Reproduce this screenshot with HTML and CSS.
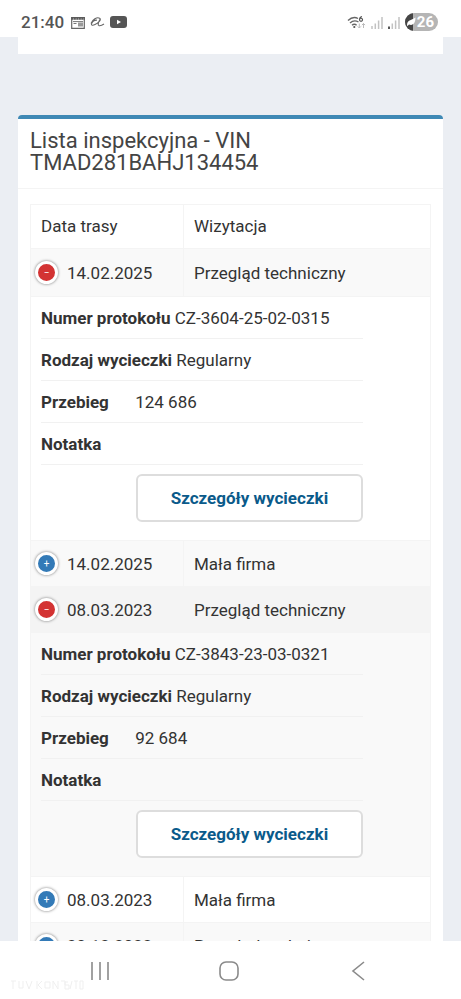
FILE: index.html
```html
<!DOCTYPE html>
<html lang="pl">
<head>
<meta charset="utf-8">
<meta name="viewport" content="width=device-width, initial-scale=1">
<title>Lista inspekcyjna</title>
<link rel="stylesheet" href="styles.css">
</head>
<body>
<header class="status">
  <div class="status-group">
    <span class="clock">21:40</span>
    <svg viewBox="0 0 14 13" width="14" height="13"><path d="M.7 1.5h12.6v10.8H.7z" fill="none" stroke="#666" stroke-width="1.2"/><path d="M.2 2.4h13.600" stroke="#5a5a5a" stroke-width="2.600" stroke-dasharray="2.200 .3"/><path d="M2 5.600h10M2.500 7.500h3" stroke="#777" stroke-width="1"/><path d="M7 6.500h5v4H7z" fill="#999"/></svg>
    <svg viewBox="0 0 15 12" width="15" height="12"><path d="M1 7.500C2.500 3.500 7 .8 9.600 2.200C12 3.600 8 7 5 8.600C2.500 9.900 1 9.300 1.600 7.600C2.500 5.500 5 4 7 4.200M9.800 3.500C8.500 6.500 7.300 9 9 9.600C10.500 10 12.500 9 14 8" fill="none" stroke="#666" stroke-width="1.100"/></svg>
    <svg viewBox="0 0 17 12" width="17" height="12"><rect width="17" height="12" rx="3" fill="#555"/><path d="M7 3.700v4.600L11 6z" fill="#fff"/></svg>
  </div>
  <div class="status-group">
    <svg viewBox="0 0 20 15" width="20" height="15"><g fill="none" stroke="#666" stroke-width="1.400"><path d="M2 5.500Q7 .8 12 3.500M4 8Q8 4.400 12.500 7M6 10.300q2.300-2 4.600 0"/></g><circle cx="8.300" cy="12" r="1.100" fill="#555"/><path d="M16 1.500Q13.500 2 13.500 4.800a1.500 1.500 0 1 0 .1-.6" fill="none" stroke="#555" stroke-width="1.200"/><path d="M13.300 8.500V13m-1.600-1.600 1.600 1.600 1.600-1.600M17.500 13V8.500m-1.600 1.600 1.600-1.600 1.600 1.600" fill="none" stroke="#bbb"/></svg>
    <svg viewBox="0 0 12 13" width="12" height="13"><path d="M1 10v3M4.300 7.500V13M7.600 4.500V13M11 1v12" stroke="#c2c2c2" stroke-width="1.500"/></svg>
    <svg viewBox="0 0 12 13" width="12" height="13"><path d="M1 10.500V13" stroke="#555" stroke-width="2"/><path d="M4.300 7.500V13M7.600 4.500V13M11 1v12" stroke="#c2c2c2" stroke-width="1.500"/></svg>
    <span class="battery"><svg viewBox="0 0 11 18" width="11" height="18"><path d="M0 0h8v18H0z" fill="#454545"/><path d="M2 12.500C2 7 6 7.500 10.500 4.500C10.500 10 8 13 4 11.500L2.500 13z" fill="#fff"/></svg>26</span>
  </div>
</header>

<main class="page">
  <div class="prev-box"></div>
  <section class="box">
    <h1 class="box-title">Lista inspekcyjna - VIN TMAD281BAHJ134454</h1>
    <div class="box-body">
      <table class="visits">
        <thead>
          <tr><th class="col-date" scope="col">Data trasy</th><th scope="col">Wizytacja</th></tr>
        </thead>
        <tbody>
          <tr class="odd first"><td><span class="date"><button class="toggle open" aria-label="Zwiń">−</button>14.02.2025</span></td><td>Przegląd techniczny</td></tr>
          <tr class="detail"><td colspan="2">
            <ul class="fields">
              <li><b>Numer protokołu</b> CZ-3604-25-02-0315</li>
              <li><b>Rodzaj wycieczki</b> Regularny</li>
              <li><b>Przebieg</b> 124 686</li>
              <li><b>Notatka</b></li>
              <li class="action"><a class="btn" href="#">Szczegóły wycieczki</a></li>
            </ul>
          </td></tr>
          <tr class="odd"><td><span class="date"><button class="toggle" aria-label="Rozwiń">+</button>14.02.2025</span></td><td>Mała firma</td></tr>
          <tr class="hover"><td><span class="date"><button class="toggle open" aria-label="Zwiń">−</button>08.03.2023</span></td><td>Przegląd techniczny</td></tr>
          <tr class="detail odd"><td colspan="2">
            <ul class="fields">
              <li><b>Numer protokołu</b> CZ-3843-23-03-0321</li>
              <li><b>Rodzaj wycieczki</b> Regularny</li>
              <li><b>Przebieg</b> 92 684</li>
              <li><b>Notatka</b></li>
              <li class="action"><a class="btn" href="#">Szczegóły wycieczki</a></li>
            </ul>
          </td></tr>
          <tr><td><span class="date"><button class="toggle" aria-label="Rozwiń">+</button>08.03.2023</span></td><td>Mała firma</td></tr>
          <tr class="odd"><td><span class="date"><button class="toggle" aria-label="Rozwiń">+</button>20.12.2022</span></td><td>Przegląd techniczny</td></tr>
        </tbody>
      </table>
    </div>
  </section>
</main>

<nav class="navbar">
  <button aria-label="Ostatnie"><svg viewBox="0 0 20 20" width="20" height="20"><path d="M2 1v18M10 1v18M18 1v18" stroke="#8a8a8a" stroke-width="1.600"/></svg></button>
  <button aria-label="Ekran główny"><svg viewBox="0 0 20 20" width="20" height="20"><rect x="1" y="1" width="18" height="18" rx="6" fill="none" stroke="#8a8a8a" stroke-width="1.600"/></svg></button>
  <button aria-label="Wstecz"><svg viewBox="0 0 20 20" width="20" height="20"><path d="M16 1 5 10 16 19" fill="none" stroke="#8a8a8a" stroke-width="1.600"/></svg></button>
  <svg class="mark" viewBox="0 0 74 10" width="74" height="10"><path d="M1 1h5M3 1v8M9 1v7h4V1M16 1l3 8 3-8M27 1v8M32 1l-4 4 4 4M35 2h5v6h-5zM43 9V1l5 8V1M51 1h4v8M58 2h-3v3h4v4h-4M62 1l-2 8M64 1h4M66 1v8M70 1h3v8h-3z" fill="none" stroke="#efefef"/></svg>
</nav>
</body>
</html>
```
FILE: styles.css
```css
* { box-sizing: border-box; }

body {
  margin: 0;
  height: 100vh;
  display: flex;
  flex-direction: column;
  overflow: hidden;
  background: #fff;
  color: #333;
  font: 17px/24px Roboto, sans-serif;
}

button { border: 0; padding: 0; background: none; font: inherit; }
svg { display: block; }

.status {
  flex: none;
  height: 37px;
  padding: 7px 23px 0 21px;
  display: flex;
  align-items: center;
  justify-content: space-between;
}
.status-group { display: flex; align-items: center; gap: 5px; color: #555; }
.clock { font-weight: 500; margin-right: 2px; }
.battery {
  display: flex;
  align-items: center;
  height: 18px;
  padding-right: 4px;
  gap: 1px;
  border-radius: 9px;
  overflow: hidden;
  background: #b5b5b5;
  color: #fff;
  font-size: 15px;
  font-weight: 700;
}

.page {
  flex: 1;
  min-height: 0;
  overflow: hidden;
  padding: 0 18px;
  background: #ebeef3;
}
.prev-box { height: 17px; margin-bottom: 61px; background: #fff; }
.box {
  border-top: 4px solid #3f89b5;
  border-radius: 4px;
  background: #fff;
}
.box-title {
  margin: 0;
  padding: 11px 12px 14px;
  border-bottom: 1px solid #f4f4f4;
  font-size: 22px;
  line-height: 22px;
  font-weight: 400;
  color: #444;
}
.box-body { padding: 15px 12px; }

.visits {
  width: 100%;
  table-layout: fixed;
  border-collapse: separate;
  border-spacing: 0;
  border: 1px solid #f4f4f4;
}
.visits th, .visits td {
  height: 46px;
  padding: 0 10px;
  text-align: left;
  font-weight: 400;
  border-top: 1px solid #f4f4f4;
}
.visits th { height: 43px; padding-bottom: 2px; border-top: 0; }
.visits tr > :first-child:not([colspan]) { border-right: 1px solid #f4f4f4; }
.visits .first td { height: 48px; }
.col-date { width: 153px; }
.odd { background: #f9f9f9; }
.hover { background: #f4f4f4; }

.date { display: flex; align-items: center; gap: 9px; margin-left: -6px; }
.toggle {
  flex: none;
  width: 23px;
  height: 23px;
  border: 3px solid #fff;
  border-radius: 50%;
  box-shadow: 0 0 3px #777;
  background: #337ab7;
  color: #fff;
  font-size: 10px;
  line-height: 17px;
  text-align: center;
}
.toggle.open { background: #d33333; }

.visits .detail td { padding: 0 10px 18px; }
.fields { list-style: none; margin: 0; padding: 0; width: 85%; }
.fields li { height: 42px; padding-top: 9px; border-bottom: 1px solid #f1f1f1; white-space: nowrap; }
.fields b { display: inline-block; min-width: 90px; }
.fields .action { height: auto; border: 0; display: flex; justify-content: flex-end; }
.btn {
  padding: 10px 33px;
  border: 2px solid #ddd;
  border-radius: 6px;
  background: #fff;
  color: #0a5a8a;
  font-weight: 700;
  text-decoration: none;
}

.navbar {
  position: relative;
  flex: none;
  height: 58px;
  padding: 2px 38px 0 35px;
  display: grid;
  grid-template-columns: repeat(3, 1fr);
  justify-items: center;
  align-items: center;
  background: #fff;
}
.mark { position: absolute; left: 10px; bottom: 9px; }
```
